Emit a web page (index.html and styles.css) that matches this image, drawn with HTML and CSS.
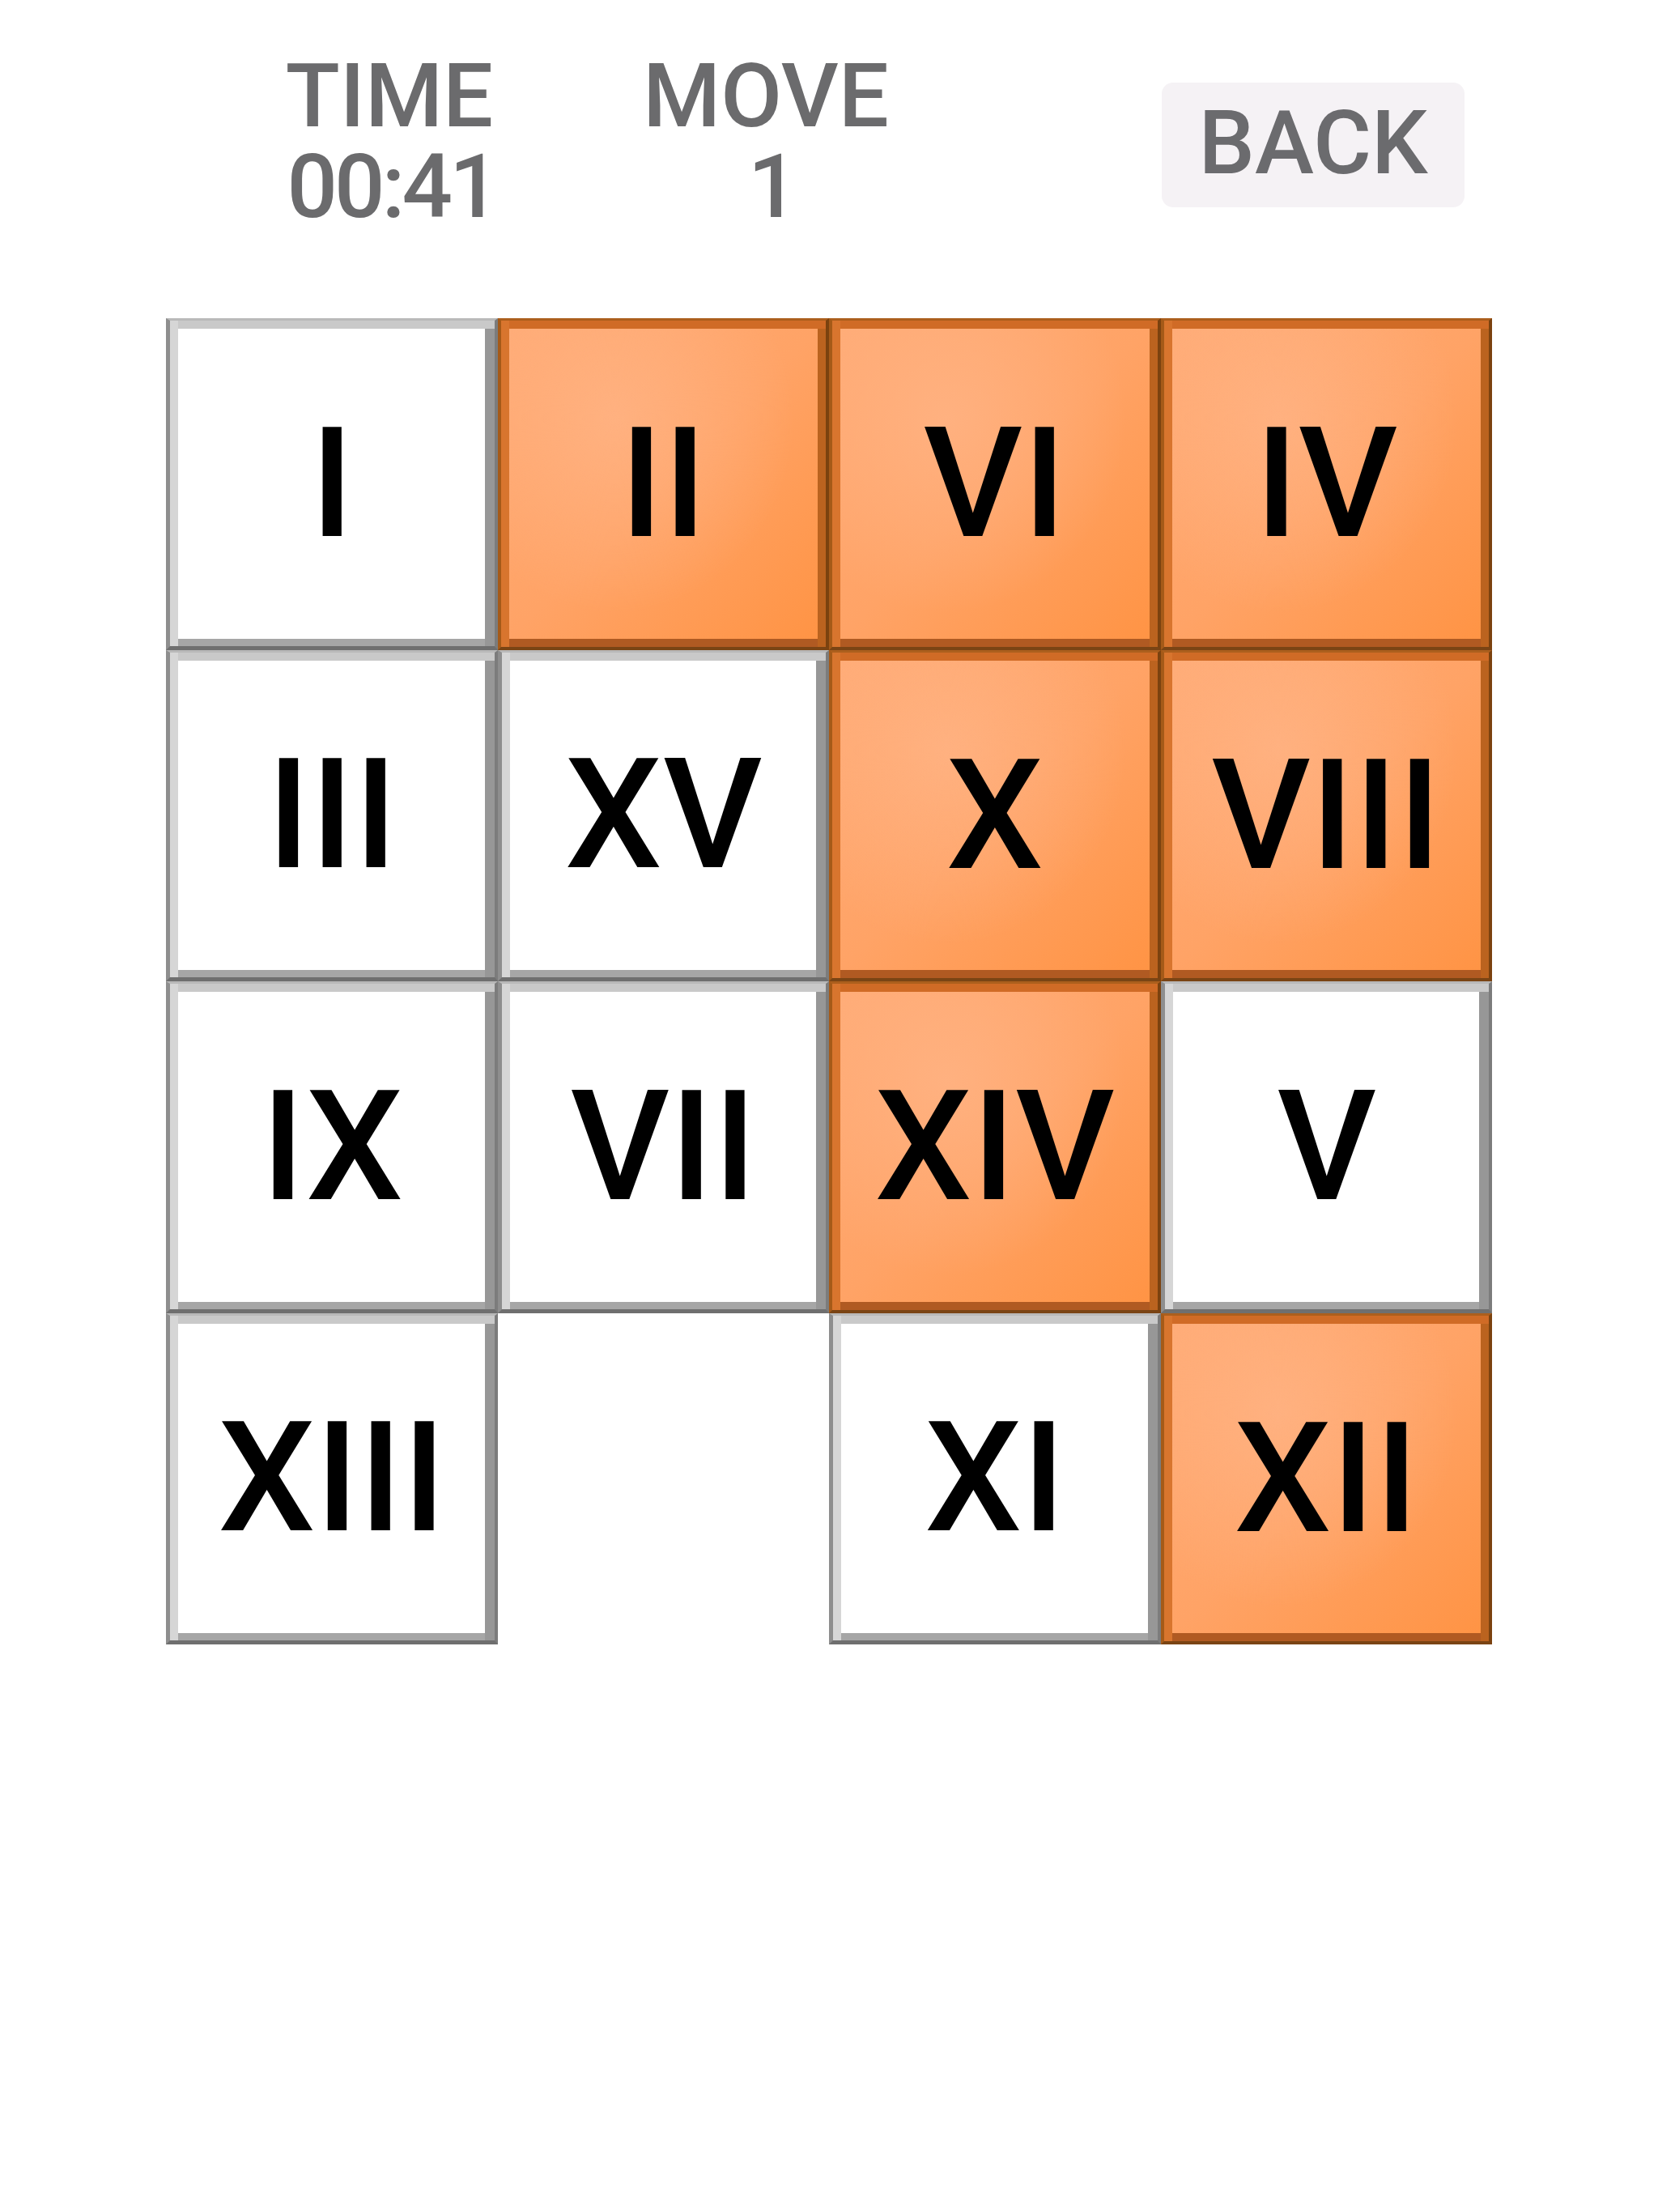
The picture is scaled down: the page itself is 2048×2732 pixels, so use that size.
FILE: index.html
```html
<!DOCTYPE html>
<html lang="en">
<head>
<meta charset="utf-8">
<title>Puzzle 15</title>
<link rel="stylesheet" href="styles.css">
</head>
<body>
<div class="app">
  <header class="top">
    <div class="stat stat-time">
      <div class="stat-label">TIME</div>
      <div class="stat-value">00:41</div>
    </div>
    <div class="stat stat-move">
      <div class="stat-label">MOVE</div>
      <div class="stat-value">1</div>
    </div>
    <button class="back">BACK</button>
  </header>
  <main class="board">
    <div class="tile w">I</div>
    <div class="tile o">II</div>
    <div class="tile o">VI</div>
    <div class="tile o">IV</div>
    <div class="tile w">III</div>
    <div class="tile w">XV</div>
    <div class="tile o">X</div>
    <div class="tile o">VIII</div>
    <div class="tile w">IX</div>
    <div class="tile w">VII</div>
    <div class="tile o">XIV</div>
    <div class="tile w">V</div>
    <div class="tile w">XIII</div>
    <div class="tile e"></div>
    <div class="tile w">XI</div>
    <div class="tile o">XII</div>
  </main>
</div>
</body>
</html>
```
FILE: styles.css
```css
html, body {
  margin: 0;
  padding: 0;
  background: #ffffff;
}

.app {
  width: 2048px;
  min-height: 2732px;
  font-family: Roboto, "Liberation Sans", sans-serif;
}

.top {
  display: flex;
  align-items: flex-start;
  height: 393px;
  box-sizing: border-box;
  padding-left: 321px;
  gap: 145px;
}

.stat {
  width: 320px;
  margin-top: 63px;
  text-align: center;
  color: #6b6b6d;
  font-size: 110px;
  font-weight: 500;
  line-height: 112px;
}

.stat-time .stat-value {
  letter-spacing: -4px;
  padding-left: 6px;
}

.stat-move .stat-value {
  padding-left: 18px;
}

.back {
  margin-left: auto;
  margin-right: 239px;
  margin-top: 102px;
  width: 374px;
  height: 154px;
  border: none;
  border-radius: 14px;
  background: #f5f2f5;
  color: #6b6b6e;
  font-family: Roboto, "Liberation Sans", sans-serif;
  font-size: 110px;
  font-weight: 500;
  display: flex;
  align-items: center;
  justify-content: center;
  padding: 0 0 6px 0;
}

.board {
  display: grid;
  grid-template-columns: repeat(4, 409.5px);
  grid-template-rows: repeat(4, 409.5px);
  margin-left: 205px;
  width: 1638px;
}

.tile {
  box-sizing: border-box;
  display: flex;
  align-items: center;
  justify-content: center;
  font-size: 190px;
  font-weight: 500;
  color: #000000;
  line-height: 1;
}

.tile.w {
  background: #ffffff;
  border-left: 5px solid #8e8e8e;
  border-top: 3px solid #b9b9b9;
  border-right: 4px solid #7c7c7c;
  border-bottom: 5px solid #6f6f6f;
  box-shadow:
    inset 10px 0 0 #d6d6d6,
    inset 0 10px 0 #c9c9c9,
    inset -12px 0 0 #979797,
    inset 0 -9px 0 #a6a6a6;
}

.tile.o {
  background:
    radial-gradient(ellipse at 35% 30%, rgba(255, 178, 130, 0.9) 0%, rgba(255, 170, 115, 0) 60%),
    linear-gradient(135deg, #ffab76 0%, #ffa366 50%, #ff9343 100%);
  border-left: 4px solid #a55a18;
  border-top: 3px solid #ac5f1d;
  border-right: 4px solid #7b420f;
  border-bottom: 4px solid #7a4414;
  box-shadow:
    inset 10px 0 0 #d8752e,
    inset 0 10px 0 #d06b26,
    inset -10px 0 0 #bb631f,
    inset 0 -10px 0 #b05a22;
}

.tile.e {
  background: transparent;
}
```
